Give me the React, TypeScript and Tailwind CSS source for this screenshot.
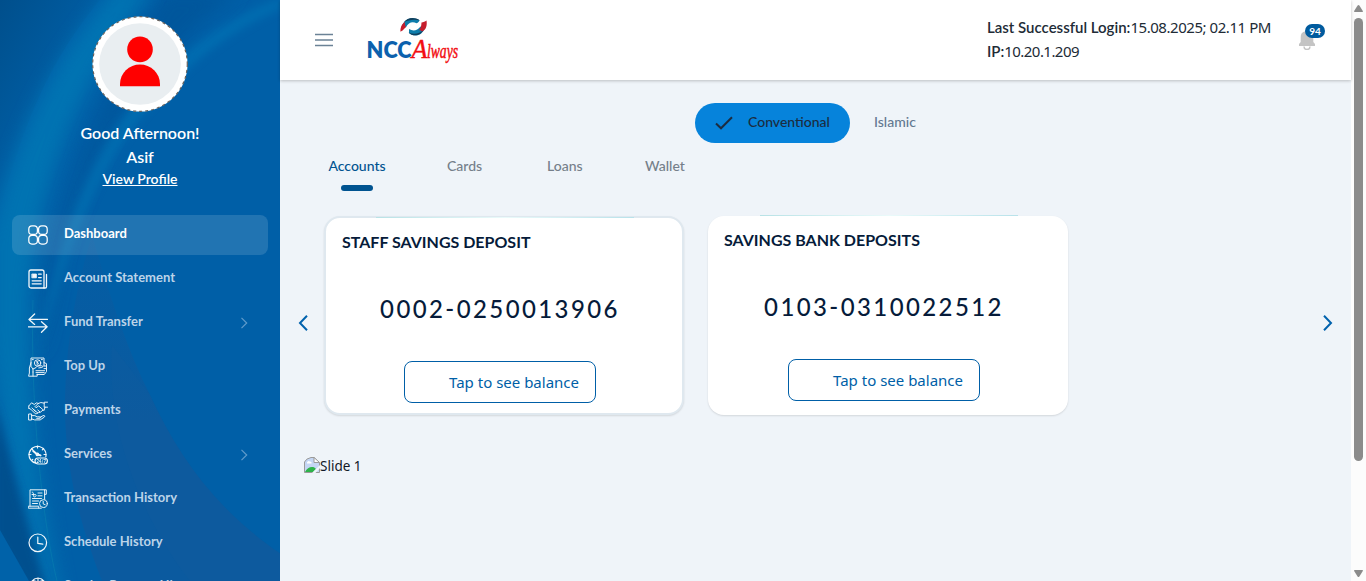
import type { ReactNode } from "react";

function Icon({ children, w = 1.3 }: { children: ReactNode; w?: number }) {
  return (
    <svg width="20" height="20" viewBox="0 0 20 20" fill="none" stroke="currentColor" strokeWidth={w} strokeLinecap="round" strokeLinejoin="round" className="shrink-0">
      {children}
    </svg>
  );
}

const DashboardIcon = (
  <Icon w={1.25}>
    <rect x="0.8" y="0.8" width="8.6" height="8.6" rx="3.2" />
    <rect x="10.6" y="0.8" width="8.6" height="8.6" rx="3.2" />
    <rect x="0.8" y="10.4" width="8.6" height="8.6" rx="3.2" />
    <rect x="10.6" y="10.4" width="8.6" height="8.6" rx="3.2" />
  </Icon>
);

const StatementIcon = (
  <Icon w={1.3}>
    <path d="M3 1h11a2 2 0 0 1 2 2v16H3a2 2 0 0 1-2-2V3a2 2 0 0 1 2-2z" />
    <path d="M16 19h1.2a1.3 1.3 0 0 0 1.3-1.3V5.5" />
    <rect x="4.2" y="5" width="4.2" height="3.8" fill="currentColor" strokeWidth="0.8" />
    <path d="M10.6 5.2h2.6M10.6 8.6h2.6M4.2 11.8h9M4.2 14.8h9" />
  </Icon>
);

const TransferIcon = (
  <Icon w={1.3}>
    <path d="M19.5 6.4H1M6.6 1 1 6.4l5.6 5" />
    <path d="M.5 13.8H19M13.5 8.8l5.6 5-5.6 5.4" />
  </Icon>
);

const TopUpIcon = (
  <Icon w={0.95}>
    <path d="M3 9V1h13v8M4.3 2.6h1M13.4 2.6h1" />
    <circle cx="9.6" cy="6" r="3.2" />
    <path d="M8.4 4.7c1 .2 2 1.2 2.4 2.4M9.9 4.2c-1 1-1 2.6-.6 3.6" />
    <path d="M3 5.5 1.4 11v5L.6 19.2h8.6v-2M3 9.5l2 2.5v3M5 12l3-1.4 1.6-1.8h4.2c1.3 0 1.3 1.6 0 1.7l-3 .4M16 5.5l2.5 1.2v7.8l-2.2 3H9M8 13.7h8.6M8 15.6h8.2M16 9h2.4M16 11.6h2.4M5 15v4" />
  </Icon>
);

const PaymentsIcon = (
  <Icon w={0.95}>
    <path d="M19.5 1.2h-3.3v5h3.3M16.2 2.2l-3.3-.7-2.7 1-3.2 3.2 1 1 2.7-1.8 5.3 4.7 1-3.4" />
    <path d="M.8 5 3.5 1.8l2.8 1.7 2-1.6 2.4.6M1 7.4l1.8.8 4.6 4.6 1.4-.2 1.8-1.1 1.6-.2 2.6-2M4 6.9l3.3 3.5M6 8.8l3.8 3.2M9.8 9l2 1.8M.8 5v2.4" />
    <path d="M1 13h2.6v6H1zM3.6 14.6h3.2l2.4 1.2h2.6c1.2 0 1.2 1.5 0 1.5H8.7M11.8 16.5l3.2-1.8c1.5-.6 2.4.4 1.2 1.5l-4 2.7H6.6l-3-1" />
  </Icon>
);

const ServicesIcon = (
  <Icon w={1.2}>
    <path d="M17.8 11.8a8.5 8.5 0 1 0-9.7 6.4" />
    <path d="M9.5 1v2M1 9.5h2M3.5 3.5l1.3 1.3M15.6 3.5l-1.3 1.3M18 9.5h-2M3.6 15.5l1.2-1.2" />
    <path d="M5.2 6 9 9.2l3.5 1.2" strokeWidth="2" />
    <rect x="7" y="13" width="12.4" height="6" rx="3" />
    <circle cx="9.4" cy="9.4" r="1.2" fill="currentColor" />
    <text x="8.6" y="17.8" fontSize="5" fontWeight="700" textLength="9.2" lengthAdjust="spacingAndGlyphs" fill="currentColor" stroke="none">24/7</text>
  </Icon>
);

const TransactionsIcon = (
  <Icon w={0.95}>
    <path d="M2 17.2V.8h14.6v9.4M16.6.8h1.7v4.5h-1.7M.7 17.2h10v2H.7zM10.7 19.2h2.6" />
    <path d="M4.2 3.2c1 0 1.2.7 1.2 1.8v1.8c0 1.8 2.7 1.3 2.7-.4 0-1-.9-1.2-1.3-.8M4 5.5h2.4M10 4h4M10 6.8h4M4.5 9.5h9M4.5 12h6M4.5 14.5h5" />
    <circle cx="15.4" cy="14.6" r="3.9" />
    <path d="M15.2 12.4v2.5l2 .8" />
  </Icon>
);

const ClockIcon = (
  <Icon w={1.2}>
    <circle cx="9.8" cy="9.8" r="8.8" />
    <path d="M9.8 4.2v6.2l5 .8" />
  </Icon>
);

const RequestIcon = (
  <Icon w={1.1}>
    <path d="M3 5.5A9 9 0 0 1 10 1a9 9 0 0 1 7 4.5M5 3.5l5 1.5 5-1.5M10 1v4M3 5.5v10l7 4 7-4v-10l-7 4z" />
  </Icon>
);

const items: { label: string; icon: ReactNode; active?: boolean; more?: boolean }[] = [
  { label: "Dashboard", icon: DashboardIcon, active: true },
  { label: "Account Statement", icon: StatementIcon },
  { label: "Fund Transfer", icon: TransferIcon, more: true },
  { label: "Top Up", icon: TopUpIcon },
  { label: "Payments", icon: PaymentsIcon },
  { label: "Services", icon: ServicesIcon, more: true },
  { label: "Transaction History", icon: TransactionsIcon },
  { label: "Schedule History", icon: ClockIcon },
  { label: "Service Request History", icon: RequestIcon },
];

function SidebarBackdrop() {
  return (
    <svg className="absolute inset-0" width="280" height="581" viewBox="0 0 280 581">
      <defs>
        <linearGradient id="corner" gradientUnits="userSpaceOnUse" x1="0" y1="0" x2="90" y2="50">
          <stop offset="0" stopColor="#004f8c" />
          <stop offset="1" stopColor="#005fa6" />
        </linearGradient>
        <linearGradient id="dune" gradientUnits="userSpaceOnUse" x1="0" y1="235" x2="0" y2="420">
          <stop offset="0" stopColor="#0b5a9f" stopOpacity="0.3" />
          <stop offset="1" stopColor="#0b5a9f" />
        </linearGradient>
        <filter id="soft" filterUnits="userSpaceOnUse" x="-80" y="-80" width="440" height="740"><feGaussianBlur stdDeviation="9" /></filter>
        <filter id="mid" filterUnits="userSpaceOnUse" x="-80" y="-80" width="440" height="740"><feGaussianBlur stdDeviation="4" /></filter>
      </defs>
      <rect width="280" height="581" fill="#005fa7" />
      <path d="M0 0H100C50 60 25 120 0 210Z" fill="url(#corner)" />
      <path d="M165 -10H240C150 60 95 140 62 250L40 360C38 280 75 130 165 -10Z" fill="#00559a" filter="url(#soft)" opacity=".8" />
      <path d="M118 -15H155C90 70 42 160 30 290C28 400 40 500 62 600H48C20 500 -5 420 -10 330L-10 240C15 130 60 50 118 -15Z" fill="#0075b3" filter="url(#soft)" opacity=".95" />
      <path d="M282 -2C215 20 155 75 118 125C85 175 55 245 36 365L45 330C70 245 95 180 135 125C175 75 220 35 282 8Z" fill="#0078b8" filter="url(#mid)" opacity=".55" />
      <path d="M92 235C75 290 66 345 65 400C64 470 82 530 102 581H290V560C220 515 180 460 150 395C125 345 108 290 92 235Z" fill="url(#dune)" />
      <path d="M112 345C105 440 150 530 190 581H290V560C220 515 180 460 150 395Z" fill="#115c9d" opacity=".35" />
      <path d="M-6 535V400C8 450 25 520 46 590H28Z" fill="#00508e" filter="url(#mid)" />
      <path d="M0 530L29 581H0Z" fill="#0062a9" />
      <path d="M33 300C30 400 42 520 57 581" fill="none" stroke="#0a86b0" strokeWidth="1" opacity=".45" />
    </svg>
  );
}

function Sidebar() {
  return (
    <aside className="relative h-[581px] w-[280px] shrink-0 overflow-hidden bg-[#005fa7] text-white">
      <SidebarBackdrop />
      <div className="relative flex flex-col items-center pt-4">
        <svg width="96" height="96" viewBox="0 0 96 96">
          <circle cx="48" cy="48" r="47.5" fill="#fff" />
          <circle cx="48" cy="48" r="47.3" fill="none" stroke="#66605c" strokeWidth="1.2" strokeDasharray="3 3" />
          <circle cx="48" cy="48" r="40.8" fill="#e9eef1" />
          <circle cx="48" cy="33.4" r="12.8" fill="#f00" />
          <path d="M28 70.3V68a20 19.6 0 0 1 40 0v2.3z" fill="#f00" />
        </svg>
        <div className="mt-[9px] text-base leading-6 font-semibold">Good Afternoon!</div>
        <div className="text-base leading-6 font-semibold">Asif</div>
        <a className="text-sm leading-5 font-semibold underline">View Profile</a>
      </div>
      <nav className="relative mt-[26px] flex flex-col gap-1 px-3">
        {items.map((it) => (
          <div key={it.label} className={"flex h-10 items-center rounded-lg pl-4 " + (it.active ? "bg-white/13" : "")}>
            <span className={it.active ? "" : "opacity-95"}>{it.icon}</span>
            <span className={"-mt-[2px] ml-4 grow text-[13px] font-bold whitespace-nowrap " + (it.active ? "text-white" : "text-[#bcd4e9]")}>{it.label}</span>
            {it.more && (
              <svg width="8" height="12" viewBox="0 0 8 12" className="mr-5 shrink-0" fill="none" stroke="#5f9bcb" strokeWidth="1.2">
                <path d="M1.5 .8 6.7 6 1.5 11.2" />
              </svg>
            )}
          </div>
        ))}
      </nav>
    </aside>
  );
}

function Logo() {
  return (
    <svg width="96" height="50" viewBox="0 0 96 50" className="overflow-visible">
      <path d="M34.5 11C37 4 42 1.8 46 2.3c3 .2 5 .9 6.500 2.2-1 1.8-2 2.6-3 2.8-4-2-8-1-10.500 4z" fill="#0d7dab" />
      <path d="M36.5 6.5C41 1.5 47 .6 53 4.5 47 3 41.5 4 36.5 6.5z" fill="#123f5c" />
      <path d="M33.5 15.8c-.3-4 1.3-8 4.500-9.800-.5 3 .5 4 1 5-1.500 1-2 3-5.500 4.800z" fill="#c51d2c" />
      <path d="M42 13c4 2.500 8 2 11.500-2.500l4.500 1.500c-2 5-5.500 7.500-9.500 7.500-3-.1-5-1-6.500-2.500z" fill="#0d7dab" />
      <path d="M41.500 16.500c6 2.200 11 1.300 15-2.500-3 5.500-10 7.500-15 2.500z" fill="#123f5c" />
      <path d="M59.500 4.500c.8 5-.3 9.500-4.500 11-1-1-2-1.300-3-1.500 2-2 2.300-4.500 2.500-7.500 2-.3 3.500-1 5-2z" fill="#c51d2c" />
      <text x="-.5" y="41.500" className="font-['Lato']" fontWeight="800" fontSize="23" textLength="45" lengthAdjust="spacingAndGlyphs" fill="#0c61ad">NCC</text>
      <text x="44.500" y="41.500" className="font-['Liberation_Serif',serif]" fontStyle="italic" fontSize="27" textLength="16" lengthAdjust="spacingAndGlyphs" fill="#f20d12" stroke="#f20d12" strokeWidth=".4">A</text>
      <text x="60" y="41.500" className="font-['Liberation_Serif',serif]" fontStyle="italic" fontSize="20" textLength="31" lengthAdjust="spacingAndGlyphs" fill="#f20d12" stroke="#f20d12" strokeWidth=".5">lways</text>
    </svg>
  );
}

function Header() {
  return (
    <header className="relative z-10 flex h-20 w-full bg-white pl-[35px] shadow-[0_1px_3px_rgba(0,0,0,0.22)]">
      <svg width="18" height="14" viewBox="0 0 18 14" className="mt-[33px]" stroke="#6b8296" strokeWidth="1.5">
        <path d="M0 1.5h18M0 7h18M0 12.5h18" />
      </svg>
      <div className="mt-4 ml-[34px] w-[94px]"><Logo /></div>
      <div className="mt-[15px] ml-[526px] w-[290px] text-[15px] leading-6 whitespace-nowrap text-[#212b36]">
        <div><span className="font-semibold">Last Successful Login:</span><span className="font-['Noto_Sans'] tracking-[-0.45px]">15.08.2025; 02.11 PM</span></div>
        <div><span className="font-semibold">IP:</span><span className="font-['Noto_Sans'] tracking-[-0.55px]">10.20.1.209</span></div>
      </div>
      <div className="relative mt-[28px] ml-[20px] h-6 w-7">
        <svg width="20" height="22" viewBox="0 0 20 22" fill="#c4c4c4">
          <path d="M2 18v-2l1.7-2V9.5A6 6 0 0 1 8.5 3.2a1.5 1.5 0 0 1 3 0 6 6 0 0 1 4.8 6.3V14l1.7 2v2z" />
          <path d="M7 18.5a3 3 0 0 0 6 0" fill="none" stroke="#c4c4c4" strokeWidth="1.4" />
        </svg>
        <span className="absolute -top-[4px] left-[8px] flex h-[14px] w-5 items-center justify-center rounded-full bg-[#005b9e] text-[10px] leading-none font-bold text-white">94</span>
      </div>
    </header>
  );
}

function AccountCard({ title, number, selected }: { title: string; number: string; selected?: boolean }) {
  return (
    <div className={"relative flex h-[199px] w-[360px] shrink-0 flex-col rounded-[16px] bg-white " + (selected ? "border-2 border-[#dfe8ef] shadow-[0_1px_2px_rgba(0,0,0,0.12)]" : "shadow-[0_1px_2px_rgba(0,0,0,0.12)]")}>
      <div className={"absolute -top-px h-px w-[258px] bg-linear-to-r from-[#b8e2e6] via-[#eafafa] to-[#b8e2ea] " + (selected ? "left-[50px]" : "left-[52px]")} />
      <div className="mt-3 ml-4 text-base leading-6 font-bold text-[#061b3a]">{title}</div>
      <div className={"mt-[36px] w-[352px] text-center text-2xl leading-[38px] font-medium tracking-[2.4px] text-[#061b3a] " + (selected ? "-ml-[2px]" : "")}>{number}</div>
      <div className={"mt-[33px] flex h-[42px] w-48 shrink-0 items-center justify-end rounded-lg border border-[#005fa7] pr-4 font-['Noto_Sans'] text-[15px] text-[#005fa7] " + (selected ? "ml-[78px]" : "ml-20")}>Tap to see balance</div>
    </div>
  );
}

function Chevron({ d }: { d: string }) {
  return (
    <svg width="10" height="16" viewBox="0 0 10 16" fill="none" stroke="#0062ad" strokeWidth="2"><path d={d} /></svg>
  );
}

export default function App() {
  return (
    <div className="flex h-[581px] w-[1366px] overflow-hidden bg-[#eff4f9] font-['Lato',sans-serif]">
      <Sidebar />
      <div className="flex w-[1071px] shrink-0 flex-col">
        <Header />
        <div className="mt-[23px] flex h-10 pl-[415px] text-sm">
          <div className="flex w-[155px] items-center rounded-full bg-[#0683db] pl-[20px] text-[#1c2c40]">
            <svg width="18" height="14" viewBox="0 0 18 14" fill="none" stroke="#1c2c40" strokeWidth="2" className="mr-[15px]"><path d="M1 7.5 6 12.3 17 1.3" /></svg>
            <span className="-mt-[3px] font-medium">Conventional</span>
          </div>
          <span className="mt-[9px] ml-6 font-medium text-[#637991]">Islamic</span>
        </div>
        <div className="mt-[13px] flex h-[35px] pl-12 text-sm leading-5 text-[#757f8a]">
          <div className="flex w-[58px] flex-col items-center font-medium text-[#005390]">
            <span>Accounts</span>
            <span className="mt-[9px] h-[6px] w-8 rounded-full bg-[#005390]" />
          </div>
          <span className="ml-[61px] w-[100px] font-medium">Cards</span>
          <span className="w-[98px] font-medium">Loans</span>
          <span className="font-medium">Wallet</span>
        </div>
        <div className="mt-[25px] flex h-[200px] items-start pr-[18px] pl-[18px]">
          <div className="mt-[99px] w-[26px]"><Chevron d="M9 .8 2 8l7 7.2" /></div>
          <AccountCard title="STAFF SAVINGS DEPOSIT" number="0002-0250013906" selected />
          <div className="w-6 shrink-0" />
          <AccountCard title="SAVINGS BANK DEPOSITS" number="0103-0310022512" />
          <div className="mt-[99px] ml-auto"><Chevron d="M1 .8 8 8l-7 7.2" /></div>
        </div>
        <div className="mt-[39px] ml-6 flex h-5 items-center font-['Noto_Sans'] text-[13.5px] text-[#111827]">
          <svg width="16" height="16" viewBox="0 0 16 16">
            <path d="M.5 15.5V5Q2 1.5 7 .5h3l5.5 5V15.5z" fill="#c4d6f4" stroke="#9a9a9a" />
            <path d="M10 .5v5h5.5z" fill="#fff" stroke="#9a9a9a" />
            <path d="M3 5.5a2 2 0 0 1 3-1 1.5 1.5 0 0 1 1.5 2H3z" fill="#fff" />
            <path d="M1 15c2-4 5-5.5 8-5 1.5.3 2 1 3 2l-3 3z" fill="#2db34a" />
            <path d="M8 16 16 8v3l-4.5 5z" fill="#eff4f9" />
          </svg>
          <span className="mt-[3px]">Slide 1</span>
        </div>
      </div>
      <div className="flex w-[15px] shrink-0 flex-col items-center bg-[#fcfcfc]">
        <svg width="9" height="7" viewBox="0 0 9 7" className="mt-[5px]" fill="#8b8b8b"><path d="M4.5 0Q5 0 5.4.6L9 6.2Q9 7 8.3 7H.7Q0 7 0 6.2L3.6.6Q4 0 4.5 0z" /></svg>
        <div className="mt-[6px] h-[443px] w-[9px] rounded-full bg-[#8b8b8b]" />
        <svg width="9" height="7" viewBox="0 0 9 7" className="mt-auto mb-[4px] rotate-180" fill="#8b8b8b"><path d="M4.5 0Q5 0 5.4.6L9 6.2Q9 7 8.3 7H.7Q0 7 0 6.2L3.6.6Q4 0 4.5 0z" /></svg>
      </div>
    </div>
  );
}
